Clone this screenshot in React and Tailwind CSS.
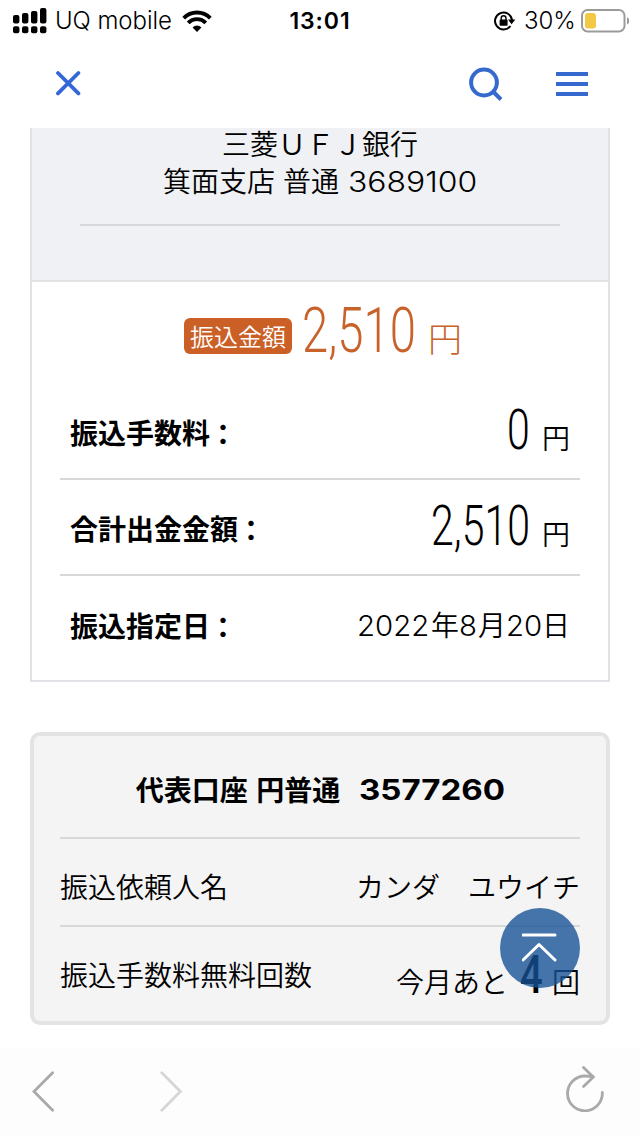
import clsx from 'clsx'

const BLUE = '#3669cd'

// ── Digits drawn narrower or wider than the font's own width ──────────────────
function Digits({ children, className, box }) {
  return (
    <span className={clsx('inline-block whitespace-nowrap', box)}>
      <span className={clsx('inline-block origin-left', className)}>{children}</span>
    </span>
  )
}

// ── Status bar icons ──────────────────────────────────────────────────────────
function SignalIcon() {
  return (
    <svg width="34" height="26" viewBox="0 0 34 26" className="shrink-0">
      {[[0, 7, 9], [9, 5, 11], [18, 3, 13], [27, 0, 16]].map(([x, y, h]) => (
        <g key={x}>
          <rect x={x} y={y} width="6.4" height={h - 0.5} rx="2" />
          <rect x={x} y="18.3" width="6.4" height="7" rx="2" />
        </g>
      ))}
    </svg>
  )
}

function WifiIcon() {
  return (
    <svg width="30" height="22" viewBox="0 0 30 22" className="shrink-0">
      <g fill="none" stroke="#000" strokeWidth="3.9">
        <path d="M1.7 8.1a18.7 18.7 0 0 1 26.6 0" />
        <path d="M6.2 12.8a12.4 12.4 0 0 1 17.6 0" />
      </g>
      <path d="M15 22l-4.4-4.6a6.3 6.3 0 0 1 8.8 0z" />
    </svg>
  )
}

function RotationLockIcon() {
  return (
    <svg width="22" height="20" viewBox="0 0 22 20" className="shrink-0">
      <path d="M16.4 15A8.5 8.5 0 1 1 18 9.2" fill="none" stroke="#000" strokeWidth="2" />
      <path d="M14 8.5h7.4L17.6 13.2z" />
      <rect x="5.6" y="8.6" width="8" height="6.2" rx="0.8" />
      <path d="M7.2 9V7.2a2.4 2.4 0 0 1 4.8 0V9" fill="none" stroke="#000" strokeWidth="1.4" />
    </svg>
  )
}

function BatteryIcon() {
  return (
    <svg width="48" height="24" viewBox="0 0 48 24" className="shrink-0">
      <rect x="1" y="1" width="42.5" height="21.4" rx="5.5" fill="none" stroke="#9b9b9b" strokeWidth="2" />
      <rect x="4" y="4" width="11" height="15.4" rx="3" fill="#f3c844" />
      <path d="M46 8.2q2.4 1 2.4 3.7T46 15.4z" fill="#9b9b9b" />
    </svg>
  )
}

function StatusBar() {
  return (
    <div className="grid h-10 grid-cols-[1fr_64px_1fr] items-center font-['Inter',sans-serif] text-2xl leading-10">
      <div className="flex items-center pl-[13px]">
        <SignalIcon />
        <span className="ml-2 w-[119px] whitespace-nowrap pt-px tracking-[-0.05px]">UQ mobile</span>
        <span className="ml-[8px]"><WifiIcon /></span>
      </div>
      <span className="whitespace-nowrap pt-px text-center text-[23px] font-semibold tracking-[0.9px]">13:01</span>
      <div className="flex items-center justify-end pr-[11px]">
        <span className="pt-px"><RotationLockIcon /></span>
        <span className="ml-[8px] w-[53px] whitespace-nowrap pt-px">30%</span>
        <span className="ml-[4px]"><BatteryIcon /></span>
      </div>
    </div>
  )
}

function Header() {
  return (
    <header className="flex h-[88px] items-center pl-[55px] pr-[52px]">
      <svg width="26" height="26" viewBox="0 0 26 26" className="mb-[2px]">
        <path d="M3 3l20.400 20.400M23.400 3L3 23.400" stroke="#3366d6" strokeWidth="3.8" strokeLinecap="round" />
      </svg>
      <svg width="34" height="34" viewBox="0 0 34 34" className="ml-auto">
        <circle cx="15" cy="15.500" r="12.900" fill="none" stroke={BLUE} strokeWidth="4" />
        <path d="M24 24.500l8 8" stroke={BLUE} strokeWidth="4" />
      </svg>
      <div className="ml-[53px] flex w-8 flex-col gap-[6px]">
        <span className="h-1 bg-[#3669cd]" />
        <span className="h-1 bg-[#3669cd]" />
        <span className="h-1 bg-[#3669cd]" />
      </div>
    </header>
  )
}

// ── Transfer summary ──────────────────────────────────────────────────────────
function Row({ label, children }) {
  return (
    <div className="flex h-24 items-center justify-between border-b-2 border-[#d8d8d8] px-[10px] last:border-b-0">
      <span className="flex pt-[3px] font-bold">
        {label}
        <span className="ml-[6px] pt-px [font-feature-settings:'halt']">：</span>
      </span>
      {children}
    </div>
  )
}

function Yen({ amount, box }) {
  return (
    <div className="flex items-baseline">
      <Digits
        box={box}
        className="origin-[0_74%] scale-x-[0.76] scale-y-[1.02] font-['Roboto',sans-serif] text-[54px] font-[350] leading-[80px]">
        {amount}
      </Digits>
      <span className="ml-[9px]">円</span>
    </div>
  )
}

function TransferCard() {
  return (
    <section className="mx-[30px] h-[554px] overflow-hidden border-x-2 border-b-2 border-[#e2e2e6]">
      <div className="h-[154px] border-b-2 border-[#e2e2e4] bg-[#f0f1f4] px-12">
        <div className="flex h-[98px] flex-col items-center border-b-2 border-[#d7d7d9]">
          <p className="leading-[30px]">三菱ＵＦＪ銀行</p>
          <p className="flex leading-[44px]">
            <span className="whitespace-pre [word-spacing:2px]">箕面支店 普通</span>
            <Digits
              box="ml-[9px] w-[129px]"
              className="scale-x-[1.12] font-['Inter',sans-serif] text-[28.5px] font-light">
              3689100
            </Digits>
          </p>
        </div>
      </div>

      <div className="flex h-[102px] items-baseline pl-[152px] text-[#c8622b]">
        <span className="mt-9 h-9 w-[108px] self-start rounded-md bg-[#cb6027] text-center text-2xl font-[350] leading-9 text-white">
          振込金額
        </span>
        <Digits
          box="ml-[10px] w-[126px]"
          className="scale-x-[0.75] font-['Roboto',sans-serif] text-[63px] font-[350] leading-[98px]">
          2,510
        </Digits>
        <span className="text-[34px] font-light">円</span>
      </div>

      <div className="px-7">
        <Row label="振込手数料"><Yen amount="0" box="w-[26px]" /></Row>
        <Row label="合計出金金額"><Yen amount="2,510" box="w-[102px]" /></Row>
        <Row label="振込指定日">
          <span className="flex pt-[2px]">
            <Digits box="w-[74px]" className="scale-x-[1.05] font-['Inter',sans-serif] font-light">2022</Digits>年
            <Digits box="w-[19px]" className="scale-x-[1.05] font-['Inter',sans-serif] font-light">8</Digits>月
            <Digits box="w-[36px]" className="scale-x-[1.05] font-['Inter',sans-serif] font-light">20</Digits>日
          </span>
        </Row>
      </div>
    </section>
  )
}

// ── Source account ────────────────────────────────────────────────────────────
function AccountCard() {
  return (
    <section className="relative mx-[30px] mt-[50px] h-[293px] rounded-[10px] border-4 border-[#e3e3e3] bg-[#f4f4f4] px-[26px]">
      <h2 className="flex h-[103px] items-center justify-center border-b-2 border-[#d8d8d8] pt-1 font-bold">
        <span className="whitespace-pre [word-spacing:2px]">代表口座 円普通</span>
        <Digits box="ml-[19px] w-[145px]" className="scale-x-[1.18] font-['Inter',sans-serif]">3577260</Digits>
      </h2>
      <div className="flex h-[88px] items-center justify-between border-b-2 border-[#d8d8d8] pt-2">
        <span>振込依頼人名</span>
        <span>カンダ　ユウイチ</span>
      </div>
      <div className="flex h-[94px] items-baseline justify-between">
        <span className="self-start leading-[94px]">振込手数料無料回数</span>
        <span className="flex items-baseline pt-px">
          今月あと
          <Digits
            box="ml-[12px] w-[23px]"
            className="scale-x-[0.74] font-['Roboto',sans-serif] text-[54px] font-medium leading-[94px]">
            4
          </Digits>
          <span className="ml-[9px]">回</span>
        </span>
      </div>

      {/* Floating "back to top" button */}
      <button
        aria-label="ページトップへ"
        className="absolute right-[26px] top-[172px] flex size-20 items-center justify-center rounded-full bg-[#145196]/79">
        <svg width="36" height="30" viewBox="0 0 36 30" fill="none" stroke="#fff" strokeWidth="3" strokeLinecap="round" strokeLinejoin="round">
          <path d="M1 2h32M1 27l16-15.500L33 27" />
        </svg>
      </button>
    </section>
  )
}

// ── Browser toolbar ───────────────────────────────────────────────────────────
function Toolbar() {
  return (
    <nav className="mt-[23px] flex h-[88px] items-center bg-[#fdfdfd] pl-[31px] pr-[35px]">
      <svg width="24" height="42" viewBox="0 0 24 42" fill="none" stroke="#a9a9a9" strokeWidth="2.8" strokeLinecap="round">
        <path d="M21.600 1.800L3 20.500l18.600 18.800" />
      </svg>
      <svg width="24" height="42" viewBox="0 0 24 42" className="ml-[104px]" fill="none" stroke="#d6d6d6" strokeWidth="2.8" strokeLinecap="round">
        <path d="M2.800 1.800l18.600 18.700L2.800 39.300" />
      </svg>
      {/* Reload arrow */}
      <svg width="40" height="48" viewBox="0 0 40 48" className="mb-[8px] ml-auto" fill="none" stroke="#a9a9a9" strokeWidth="2.8" strokeLinecap="round">
        <path d="M37.300 28.500A17.400 17.400 0 1 1 19.900 12Q24 12 28 12.600" />
        <path d="M18.500 3.400l9.800 9.500-9.800 9.500" />
      </svg>
    </nav>
  )
}

export default function App() {
  return (
    <div className="h-[1136px] w-[640px] overflow-hidden bg-white font-['Noto_Sans_CJK_JP',sans-serif] text-[28px] font-[350] text-black">
      <StatusBar />
      <Header />
      <TransferCard />
      <AccountCard />
      <Toolbar />
    </div>
  )
}
